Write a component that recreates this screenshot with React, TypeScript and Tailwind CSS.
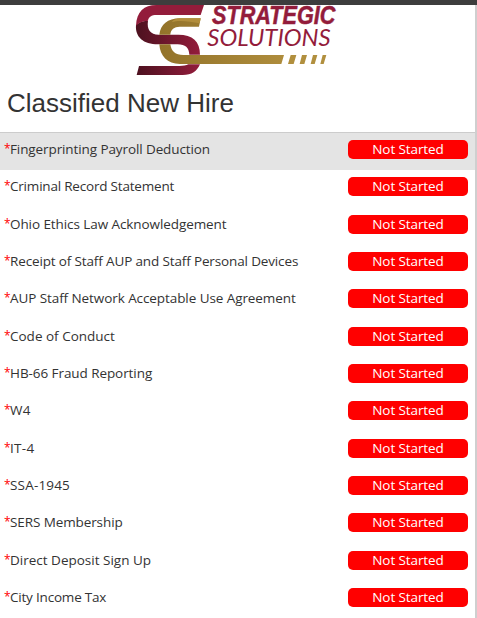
const TASKS = [
  { name: 'Fingerprinting Payroll Deduction', tracking: 'tracking-[-0.1px]' },
  { name: 'Criminal Record Statement', tracking: 'tracking-[-0.2px]' },
  { name: 'Ohio Ethics Law Acknowledgement', tracking: 'tracking-[-0.08px]' },
  { name: 'Receipt of Staff AUP and Staff Personal Devices', tracking: 'tracking-[-0.14px]' },
  { name: 'AUP Staff Network Acceptable Use Agreement', tracking: 'tracking-[-0.08px]' },
  { name: 'Code of Conduct', tracking: 'tracking-normal' },
  { name: 'HB-66 Fraud Reporting', tracking: 'tracking-[-0.07px]' },
  { name: 'W4', tracking: 'tracking-[0.4px]' },
  { name: 'IT-4', tracking: 'tracking-[0.3px]' },
  { name: 'SSA-1945', tracking: 'tracking-[0.18px]' },
  { name: 'SERS Membership', tracking: 'tracking-[-0.1px]' },
  { name: 'Direct Deposit Sign Up', tracking: 'tracking-normal' },
  { name: 'City Income Tax', tracking: 'tracking-[-0.2px]' },
];

function Logo() {
  return (
    <svg className="ml-[130px] block h-[75px] w-[210px]" viewBox="0 15 630 225" role="img" aria-label="Strategic Solutions">
      <defs>
        <linearGradient id="maroon" gradientUnits="userSpaceOnUse" x1="18" y1="0" x2="210" y2="0">
          <stop offset="0" stopColor="#4c111f" />
          <stop offset="1" stopColor="#931c3b" />
        </linearGradient>
        <linearGradient id="gold" gradientUnits="userSpaceOnUse" x1="88" y1="0" x2="500" y2="0">
          <stop offset="0" stopColor="#93732a" />
          <stop offset="1" stopColor="#b18f3e" />
        </linearGradient>
      </defs>
      <path d="M18 75 C32 62 42 63 54 62 C50 89 61 103 86 104 H145 C188 104 210 124 210 164 H178 C177 143 166 133 143 133 H84 C40 133 15 111 18 75 Z" fill="url(#maroon)" />
      <path d="M210 193 C201 214 186 225 158 225 H20 L27 198 H148 C160 198 169 196 175 193 Z" fill="url(#maroon)" />
      <path d="M18 77 C20 35 42 15 79 15 H222 L212 45 H80 C64 45 56 51 54 62 C40 63 30 65 18 77 Z" fill="#931c3b" />
      <path d="M212 55 L207 80 H149 C133 80 122 88 121 104 H88 C92 74 112 55 150 55 Z M88 133 H121 C124 155 136 165 160 165 H462 L454 192 H150 C112 192 90 168 88 133 Z" fill="url(#gold)" />
      <path d="M125 67 C150 58 180 66 209 70 L212 55 H150 C140 55 132 58 125 67 Z" fill="#b28e3c" />
      <path d="M482 165 H499 L491 192 H474 Z M516 165 H531 L523 192 H509 Z M549 165 H562 L554 192 H542 Z M578 165 H589 L581 192 H571 Z" fill="#b18f3e" />
      <g fill="#931c3b" fontStyle="italic">
        <text x="246" y="71" fontSize="76" fontWeight="700" fontFamily="'Liberation Sans', sans-serif" stroke="#931c3b" strokeWidth="1.5" textLength="370" lengthAdjust="spacingAndGlyphs">STRATEGIC</text>
        <text x="232" y="138" fontSize="71" fontFamily="Lato, sans-serif" textLength="370" lengthAdjust="spacingAndGlyphs">SOLUTIONS</text>
      </g>
    </svg>
  );
}

export default function App() {
  return (
    <div className="flex h-[618px] w-[477px] flex-col overflow-hidden bg-white font-['Open_Sans',sans-serif] text-[#333]">
      <div className="h-[5px] shrink-0 bg-[#3d3d3d]" />
      <main className="min-h-0 flex-1 overflow-hidden border-r-2 border-[#cfcfcf]">
        <Logo />
        <h1 className="flex h-[52px] items-center pb-[6px] pl-[7px] font-['Liberation_Sans',sans-serif] text-[26px] leading-none">Classified New Hire</h1>
        <ul className="border-t border-[#cccccc]">
          {TASKS.map((task, i) => (
            <li key={task.name} className={`flex h-[37.33px] items-start justify-between pt-[7px] pr-[7px] pl-1 ${i === 0 ? 'bg-[#e4e4e4]' : ''}`}>
              <span className={`flex text-[13.5px] leading-[19px] whitespace-nowrap ${task.tracking}`}>
                <span className="w-[6px] text-[12px] leading-[18px] tracking-normal text-[#ff0000]">*</span>
                {task.name}
              </span>
              <span className="h-[19px] w-[120px] rounded-[5px] bg-[#ff0000] text-center text-[13.5px] leading-[19px] tracking-[-0.1px] text-white">Not Started</span>
            </li>
          ))}
        </ul>
      </main>
    </div>
  );
}
